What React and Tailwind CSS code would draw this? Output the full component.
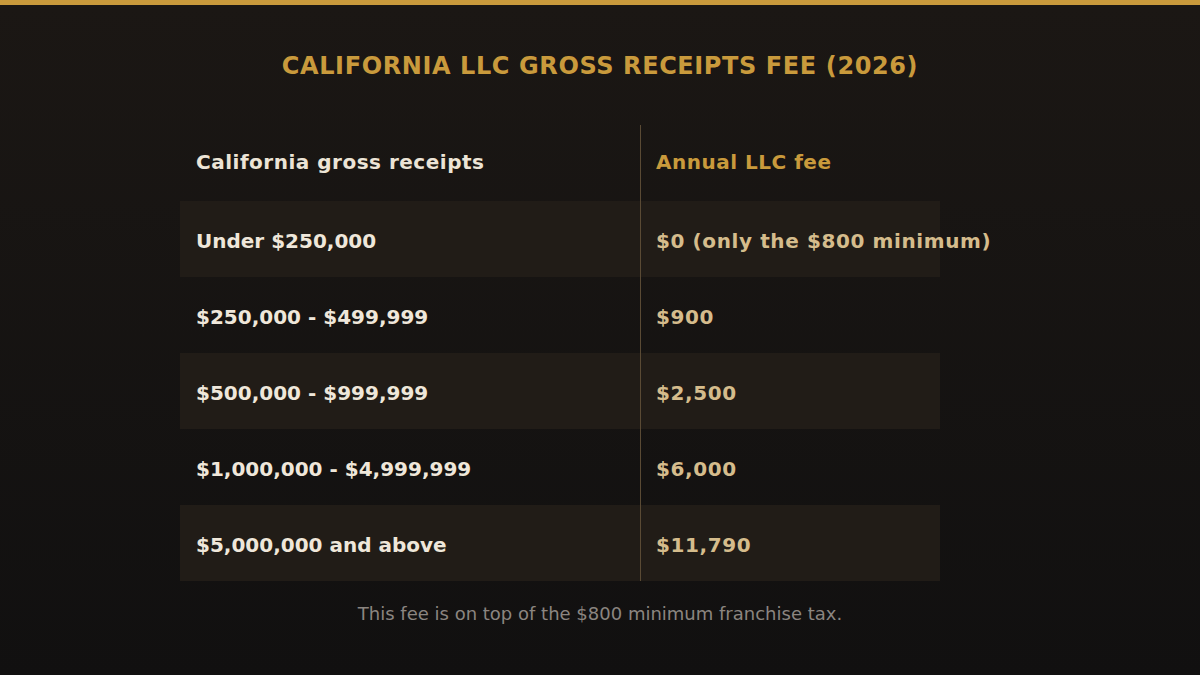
import React from 'react'

const rows = [
  ['Under $250,000', '$0 (only the $800 minimum)'],
  ['$250,000 - $499,999', '$900'],
  ['$500,000 - $999,999', '$2,500'],
  ['$1,000,000 - $4,999,999', '$6,000'],
  ['$5,000,000 and above', '$11,790'],
]

export default function App() {
  return (
    <div
      className="w-[1200px] h-[675px] flex flex-col items-center bg-gradient-to-b from-[#1b1714] to-[#111010] border-t-[5px] border-[#c99a3c]"
      style={{ fontFamily: '"DejaVu Sans", sans-serif' }}
    >
      <h1 className="mt-[46px] text-[24px] leading-[30px] font-bold tracking-[0.6px] text-[#c99a3c]">
        CALIFORNIA LLC GROSS RECEIPTS FEE (2026)
      </h1>

      {/* table sits a bit left of centre in the original */}
      <div className="self-start ml-[180px] mt-[44px] w-[760px] flex flex-col">
        <div className="flex h-[76px]">
          <div className="w-[460px] flex items-center pl-4 pb-[2px] text-[20px] font-bold tracking-[0.5px] text-[#ece4d6]">
            California gross receipts
          </div>
          <div className="w-[300px] flex items-center pl-[15px] pb-[2px] border-l border-[#5a4a34] text-[20px] font-bold tracking-[0.5px] text-[#c99a3c]">
            Annual LLC fee
          </div>
        </div>
        {rows.map(([range, fee], i) => (
          <div key={range} className={`flex h-[76px] ${i % 2 === 0 ? 'bg-[#211c17]' : ''}`}>
            <div className="w-[460px] flex items-center pl-4 pt-[3px] text-[20px] font-bold text-[#efe7da]">
              {range}
            </div>
            <div className="w-[300px] flex items-center pl-[15px] pt-[3px] border-l border-[#5a4a34] text-[20px] font-bold tracking-[0.6px] text-[#d5bc8c] whitespace-nowrap">
              {fee}
            </div>
          </div>
        ))}
      </div>

      <p className="mt-[21px] text-[18px] leading-[24px] text-[#8b8580]">
        This fee is on top of the $800 minimum franchise tax.
      </p>
    </div>
  )
}
